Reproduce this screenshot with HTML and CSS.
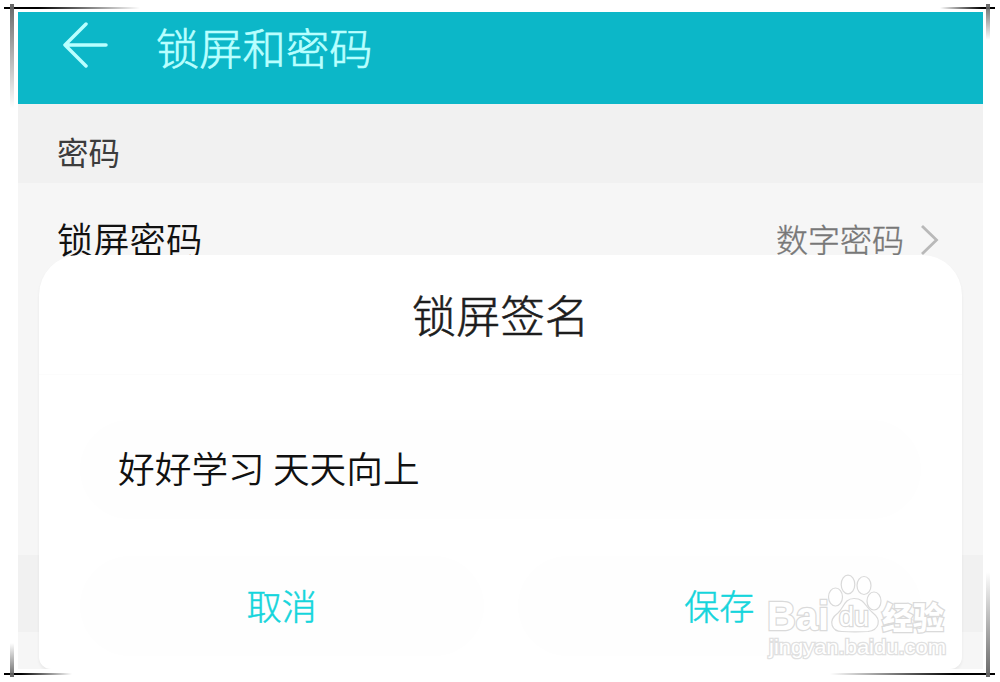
FILE: index.html
```html
<!DOCTYPE html>
<html lang="zh-CN">
<head>
  <meta charset="UTF-8">
  <meta name="viewport" content="width=device-width, initial-scale=1.0">
  <title>锁屏和密码</title>
  <link rel="stylesheet" href="styles.css">
</head>
<body>

  <div class="screen">
    <header class="header">
      <svg class="back" width="46" height="46" viewBox="0 0 46 46">
        <path d="M23 2 L2 23 L23 44 M2 23 H43" />
      </svg>
      <h1 class="header-title">锁屏和密码</h1>
    </header>

    <div class="section-title">密码</div>

    <div class="row">
      <span class="row-label">锁屏密码</span>
      <span class="row-value">数字密码</span>
      <svg class="chevron" width="20" height="32" viewBox="0 0 20 32">
        <path d="M2 2 L16.500 16 L2 30" />
      </svg>
    </div>

    <div class="section-gap"></div>

    <!-- Signature dialog -->
    <div class="dialog">
      <h2 class="dialog-title">锁屏签名</h2>
      <div class="dialog-input">好好学习 天天向上</div>
      <div class="dialog-buttons">
        <button class="dialog-button">取消</button>
        <button class="dialog-button">保存</button>
      </div>
    </div>
  </div>

  <!-- Watermark -->
  <svg class="watermark" width="190" height="96" viewBox="0 0 190 96">
    <text class="wm-brand" x="5" y="60" textLength="62" lengthAdjust="spacingAndGlyphs">Bai</text>
    <ellipse cx="73.500" cy="27" rx="7" ry="9" />
    <ellipse cx="86" cy="14.500" rx="6.800" ry="9.300" />
    <ellipse cx="102" cy="15.500" rx="7" ry="9" />
    <ellipse cx="112" cy="31" rx="7" ry="9" />
    <path d="M92 28.500 C82 28.500 82 38 76 43 C65 51 70 61.500 80 61.500 C87 62 99 62 106 61.500 C117 60 120 50 111 43 C103 37 103 28.500 92 28.500 Z" />
    <text class="wm-du" x="77" y="56" textLength="30" lengthAdjust="spacingAndGlyphs">du</text>
    <text class="wm-cn" x="120" y="58.500" textLength="62" lengthAdjust="spacingAndGlyphs">经验</text>
    <text class="wm-url" x="7" y="84" textLength="177" lengthAdjust="spacingAndGlyphs">jingyan.baidu.com</text>
  </svg>

  <!-- Frame corners -->
  <i class="line-h top-left"></i>
  <i class="line-v top-left"></i>
  <i class="line-h top-right"></i>
  <i class="line-v top-right"></i>
  <i class="line-h bottom-left"></i>
  <i class="line-v bottom-left"></i>
  <i class="line-h bottom-right"></i>
  <i class="line-v bottom-right"></i>

</body>
</html>
```
FILE: styles.css
```css
* {
  box-sizing: border-box;
}

body {
  font-family: "Noto Sans CJK SC", sans-serif;
  font-weight: 350;
  margin: 0;
  padding: 12px 17px 13px 18px;
  height: 682px;
  background: #fff;
  position: relative;
  overflow: hidden;
}

.screen {
  height: 657px;
  background: #f6f6f6;
  position: relative;
  overflow: hidden;
}

.header {
  display: flex;
  height: 92px;
  padding-left: 45px;
  background: #0cb7c8;
}

.back {
  margin-top: 10px;
  fill: none;
  stroke: #b9ffff;
  stroke-width: 3.5;
  stroke-linecap: round;
  stroke-linejoin: round;
}

.header-title {
  margin: 0 0 0 47px;
  font-size: 43.3px;
  font-weight: 300;
  line-height: 69px;
  color: #b9ffff;
  -webkit-text-stroke: 0.7px #b9ffff;
}

.section-title {
  height: 79px;
  padding: 10px 0 0 39px;
  background: #f1f1f1;
  font-size: 31.5px;
  font-weight: 400;
  line-height: 75px;
  color: #3c3c3c;
}

.row {
  display: flex;
  height: 372px;
  padding: 17px 43px 0 39px;
  font-size: 36.3px;
  line-height: 76px;
  color: #111;
}

.row-label {
  flex: 1;
}

.row-value {
  font-size: 32px;
  font-weight: 300;
  color: #777;
  -webkit-text-stroke: 0.4px #777;
}

.chevron {
  margin: 24px 0 0 16px;
  fill: none;
  stroke: #b9b9b9;
  stroke-width: 2.8;
}

.section-gap {
  height: 77px;
  background: #f1f1f1;
}

.dialog {
  position: absolute;
  left: 21px;
  right: 21px;
  top: 243px;
  height: 414px;
  background: #fff;
  border-radius: 40px 40px 12px 12px;
  box-shadow: 0 2px 3px rgba(0, 0, 0, 0.06);
}

.dialog-title {
  height: 120px;
  margin: 0;
  border-bottom: 1px solid #fcfcfc;
  text-align: center;
  font-size: 44.2px;
  font-weight: 300;
  line-height: 118px;
  color: #1d1d1d;
  -webkit-text-stroke: 0.6px #1d1d1d;
}

.dialog-input {
  height: 99px;
  margin: 45px 41px 0;
  padding-left: 38px;
  border-radius: 50px;
  background: #fefefe;
  font-size: 36.7px;
  line-height: 95px;
  color: #111;
}

.dialog-buttons {
  display: flex;
  gap: 34px;
  margin: 37px 41px 0;
}

.dialog-button {
  flex: 1;
  height: 100px;
  padding: 0 0 4px;
  border: none;
  border-radius: 50px;
  background: #fefefe;
  font-family: inherit;
  font-size: 35px;
  font-weight: 300;
  color: #15d5dc;
  -webkit-text-stroke: 0.5px #15d5dc;
}

.watermark {
  position: absolute;
  left: 762px;
  top: 570px;
  fill: #fff;
  stroke: #dadada;
  stroke-width: 1.2;
}

.watermark text {
  paint-order: stroke;
  stroke-width: 2.5;
}

.wm-brand,
.wm-du,
.wm-url {
  font-family: "Liberation Sans", sans-serif;
  font-weight: 700;
}

.wm-brand {
  font-size: 41px;
}

.wm-du {
  font-size: 27px;
  font-weight: 400;
}

.wm-cn {
  font-size: 31px;
  font-weight: 900;
}

.wm-url {
  font-size: 21px;
  font-weight: 400;
  stroke: #e0e0e0;
}

/* Corner strokes that fade out along the frame */
.line-h,
.line-v {
  position: absolute;
}

.line-h {
  height: 2px;
}

.line-v {
  width: 4px;
}

.line-h.top-left {
  left: 4px;
  top: 7px;
  width: 136px;
  background: linear-gradient(to right, #000 25%, transparent);
}

.line-v.top-left {
  left: 10px;
  top: 4px;
  height: 104px;
  background: linear-gradient(to bottom, #666, transparent);
}

.line-h.top-right {
  right: 5px;
  top: 7px;
  width: 55px;
  background: linear-gradient(to left, #000 25%, transparent);
}

.line-v.top-right {
  right: 10px;
  top: 4px;
  height: 36px;
  background: linear-gradient(to bottom, #666, transparent);
}

.line-h.bottom-left {
  left: 4px;
  bottom: 7px;
  width: 68px;
  background: linear-gradient(to right, #000 25%, transparent);
}

.line-v.bottom-left {
  left: 10px;
  bottom: 5px;
  height: 34px;
  background: linear-gradient(to top, #666, transparent);
}

.line-h.bottom-right {
  right: 5px;
  bottom: 7px;
  width: 165px;
  background: linear-gradient(to left, #000 25%, transparent);
}

.line-v.bottom-right {
  right: 10px;
  bottom: 5px;
  height: 105px;
  background: linear-gradient(to top, #666, transparent);
}
```
